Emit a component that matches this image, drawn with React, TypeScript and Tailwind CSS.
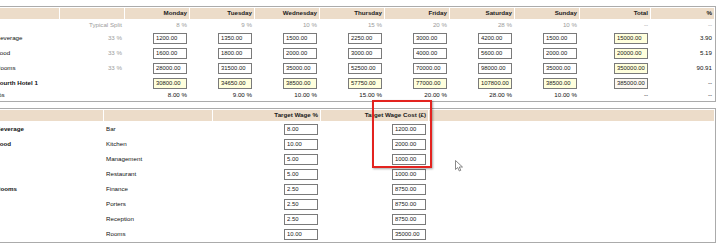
import React from "react";

const days = ["Monday", "Tuesday", "Wednesday", "Thursday", "Friday", "Saturday", "Sunday"];
const split = ["8 %", "9 %", "10 %", "15 %", "20 %", "28 %", "10 %"];

const rows = [
  { label: "Beverage", share: "33 %", values: ["1200.00", "1350.00", "1500.00", "2250.00", "3000.00", "4200.00", "1500.00"], total: "15000.00", pct: "3.90" },
  { label: "Food", share: "33 %", values: ["1600.00", "1800.00", "2000.00", "3000.00", "4000.00", "5600.00", "2000.00"], total: "20000.00", pct: "5.19" },
  { label: "Rooms", share: "33 %", values: ["28000.00", "31500.00", "35000.00", "52500.00", "70000.00", "98000.00", "35000.00"], total: "350000.00", pct: "90.91" },
];

const hotelTotals = ["30800.00", "34650.00", "38500.00", "57750.00", "77000.00", "107800.00", "38500.00"];
const percents = ["8.00 %", "9.00 %", "10.00 %", "15.00 %", "20.00 %", "28.00 %", "10.00 %"];

const wages = [
  { dept: "Beverage", area: "Bar", pct: "8.00", cost: "1200.00" },
  { dept: "Food", area: "Kitchen", pct: "10.00", cost: "2000.00" },
  { dept: "", area: "Management", pct: "5.00", cost: "1000.00" },
  { dept: "", area: "Restaurant", pct: "5.00", cost: "1000.00" },
  { dept: "Rooms", area: "Finance", pct: "2.50", cost: "8750.00" },
  { dept: "", area: "Porters", pct: "2.50", cost: "8750.00" },
  { dept: "", area: "Reception", pct: "2.50", cost: "8750.00" },
  { dept: "", area: "Rooms", pct: "10.00", cost: "35000.00" },
];

function Box({ value, tone = "white" }: { value: string; tone?: "white" | "yellow" | "cream" }) {
  const bg = tone === "yellow" ? "bg-[#ffffdc]" : tone === "cream" ? "bg-[#fcf8f1]" : "bg-white";
  return (
    <input
      readOnly
      value={value}
      className={`inline-block align-middle w-[34px] h-[11px] border border-[#7a7a7a] pl-[2px] pr-0 text-[5.9px] leading-none text-[#1a1a1a] outline-none ${bg}`}
    />
  );
}

const th = "bg-[#ecdcc9] px-[2px] text-right font-bold text-[#1a1a1a] h-[11px] p-0";
const td = "px-[2px] py-0 text-right";

export default function App() {
  return (
    <div className="relative w-[720px] h-[246px] overflow-hidden bg-white" style={{ fontFamily: '"Liberation Sans", Arial, sans-serif' }}>
      <div className="-ml-[8px] w-[724px] pt-[6px] text-[6.2px] leading-none text-[#111]">
        <table className="w-[724px] table-fixed border-separate border-spacing-[1px] border border-[#ababab]">
          <thead>
            <tr>
              <th className={`${th} w-[65px]`}></th>
              <th className={`${th} w-[64px]`}></th>
              {days.map((d) => (
                <th key={d} className={`${th} w-[64px]`}>{d}</th>
              ))}
              <th className={`${th} w-[70px]`}>Total</th>
              <th className={th}>%</th>
            </tr>
          </thead>
          <tbody>
            <tr className="h-[10px] text-[#9c9c9c]">
              <td className={td}></td>
              <td className={td}>Typical Split</td>
              {split.map((s, i) => (
                <td key={i} className={td}>{s}</td>
              ))}
              <td className={td}>--</td>
              <td className={td}>--</td>
            </tr>
            {rows.map((r) => (
              <tr key={r.label} className="h-[14px]">
                <td className="px-[2px] py-0 text-left">{r.label}</td>
                <td className={`${td} text-[#9c9c9c]`}>{r.share}</td>
                {r.values.map((v, i) => (
                  <td key={i} className={td}><Box value={v} /></td>
                ))}
                <td className={td}><Box value={r.total} tone="yellow" /></td>
                <td className={td}>{r.pct}</td>
              </tr>
            ))}
            <tr className="h-[14px]">
              <td className="px-[2px] py-0 text-left font-bold whitespace-nowrap">Fourth Hotel 1</td>
              <td className={td}></td>
              {hotelTotals.map((v, i) => (
                <td key={i} className={td}><Box value={v} tone="yellow" /></td>
              ))}
              <td className={td}><Box value="385000.00" tone="cream" /></td>
              <td className={td}>--</td>
            </tr>
            <tr className="h-[9px]">
              <td className="px-[2px] py-0 text-left">%s</td>
              <td className={td}></td>
              {percents.map((p, i) => (
                <td key={i} className={td}>{p}</td>
              ))}
              <td className={td}>--</td>
              <td className={td}>--</td>
            </tr>
          </tbody>
        </table>

        <table className="mt-[6px] w-[724px] table-fixed border-separate border-spacing-[1px] border border-[#ababab]">
          <thead>
            <tr>
              <th className={`${th} w-[109px]`}></th>
              <th className={`${th} w-[108px]`}></th>
              <th className={`${th} w-[107px]`}>Target Wage %</th>
              <th className={`${th} w-[107px]`}>Target Wage Cost (£)</th>
              <th className={th}></th>
            </tr>
          </thead>
          <tbody>
            {wages.map((w, i) => (
              <tr key={i} className="h-[14px]">
                <td className="px-[2px] py-0 text-left font-bold">{w.dept}</td>
                <td className="px-[2px] py-0 text-left">{w.area}</td>
                <td className={td}><Box value={w.pct} /></td>
                <td className={td}><Box value={w.cost} /></td>
                <td></td>
              </tr>
            ))}
          </tbody>
        </table>
      </div>

      <div className="absolute left-[372px] top-[100px] w-[60px] h-[68px] border-2 border-[#e3231f] shadow-[1px_1px_2px_rgba(0,0,0,0.35)]"></div>

      <svg className="absolute left-[455px] top-[160px]" width="9" height="12" viewBox="0 0 9 12">
        <path d="M0.5 0.5 L0.5 9.5 L2.7 7.5 L4.3 11 L5.8 10.3 L4.3 7 L7.5 7 Z" fill="white" stroke="#6b6b6b" strokeWidth="0.8" strokeLinejoin="round" />
      </svg>
    </div>
  );
}
